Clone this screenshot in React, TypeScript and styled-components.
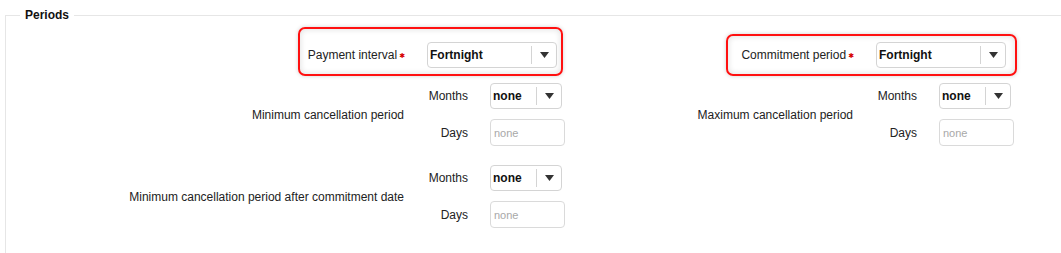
import React from "react";
import styled, { createGlobalStyle } from "styled-components";

const GlobalStyle = createGlobalStyle`
  html, body {
    margin: 0;
    padding: 0;
    background: #fff;
    font-family: "Liberation Sans", Arial, sans-serif;
    font-size: 12px;
    color: #222;
  }
`;

const Fieldset = styled.fieldset`
  margin: 8px 0 0 5px;
  padding: 20px 0 40px 0;
  border: 1px solid #e6e6e6;
  border-right: none;
  min-width: 0;
`;

const Legend = styled.legend`
  margin-left: 14px;
  padding: 0 5px;
  font-weight: bold;
  font-size: 12px;
  color: #111;
  line-height: 14px;
`;

const Columns = styled.div`
  display: grid;
  grid-template-columns: 449px 449px;
  align-items: start;
`;

const Column = styled.div`
  display: flex;
  flex-direction: column;
  align-items: flex-start;
`;

const FieldRow = styled.div<{ $mt?: number }>`
  position: relative;
  display: grid;
  grid-template-columns: 399px auto;
  column-gap: 22px;
  align-items: center;
  margin-top: ${(p) => p.$mt ?? 0}px;
`;

const GroupRow = styled.div<{ $mt?: number }>`
  display: grid;
  grid-template-columns: 398px auto;
  column-gap: 22px;
  align-items: center;
  margin-top: ${(p) => p.$mt ?? 0}px;
`;

const SubGrid = styled.div`
  display: grid;
  grid-template-columns: 42px auto;
  column-gap: 22px;
  row-gap: 10px;
  align-items: center;
`;

const Label = styled.label`
  text-align: right;
  white-space: nowrap;
  color: #222;
`;

const Star = styled.span`
  color: #d60000;
  font-family: "DejaVu Sans", sans-serif;
  font-size: 7px;
  margin-left: 2px;
  vertical-align: 1px;
`;

const Highlight = styled.div<{ $t: number; $r: number; $b: number; $l: number }>`
  position: absolute;
  top: ${(p) => p.$t}px;
  right: ${(p) => p.$r}px;
  bottom: ${(p) => p.$b}px;
  left: ${(p) => p.$l}px;
  border: 2px solid #ff1010;
  border-radius: 7px;
  box-shadow: 0 0 4px rgba(0, 0, 0, 0.18), inset 0 0 6px rgba(0, 0, 0, 0.14);
  pointer-events: none;
`;

const SelectBox = styled.div<{ $w: number }>`
  width: ${(p) => p.$w}px;
  height: 26px;
  box-sizing: border-box;
  border: 1px solid #d4d4d4;
  border-radius: 4px;
  background: #fff;
  display: flex;
  align-items: center;
`;

const SelectValue = styled.span`
  flex: 1;
  padding-left: 2px;
  font-weight: bold;
  font-size: 12px;
  color: #111;
`;

const Divider = styled.span`
  width: 1px;
  height: 18px;
  background: #d4d4d4;
`;

const ArrowCell = styled.span`
  width: 24px;
  display: flex;
  justify-content: center;
  align-items: center;
`;

const TextInput = styled.input`
  width: 75px;
  height: 27px;
  box-sizing: border-box;
  border: 1px solid #dadada;
  border-radius: 4px;
  padding: 0 0 0 3px;
  font-family: "Liberation Sans", Arial, sans-serif;
  font-size: 11px;
  outline: none;
  &::placeholder {
    color: #a8a8a8;
  }
`;

function Select({ value, width }: { value: string; width: number }) {
  return (
    <SelectBox $w={width}>
      <SelectValue>{value}</SelectValue>
      <Divider />
      <ArrowCell>
        <svg width="9" height="6" viewBox="0 0 9 6">
          <path d="M0 0 L9 0 L4.5 6 Z" fill="#333" />
        </svg>
      </ArrowCell>
    </SelectBox>
  );
}

function CancellationGroup({ label, mt }: { label: string; mt?: number }) {
  return (
    <GroupRow $mt={mt}>
      <Label>{label}</Label>
      <SubGrid>
        <Label>Months</Label>
        <Select value="none" width={72} />
        <Label>Days</Label>
        <TextInput placeholder="none" />
      </SubGrid>
    </GroupRow>
  );
}

export default function App() {
  return (
    <>
      <GlobalStyle />
      <Fieldset>
        <Legend>Periods</Legend>
        <Columns>
          <Column>
            <FieldRow>
              <Highlight $t={-15} $r={-6} $b={-8} $l={292} />
              <Label>
                Payment interval<Star>✱</Star>
              </Label>
              <Select value="Fortnight" width={130} />
            </FieldRow>
            <CancellationGroup label="Minimum cancellation period" mt={15} />
            <CancellationGroup label="Minimum cancellation period after commitment date" mt={19} />
          </Column>
          <Column>
            <FieldRow>
              <Highlight $t={-8} $r={-11} $b={-8} $l={271} />
              <Label>
                Commitment period<Star>✱</Star>
              </Label>
              <Select value="Fortnight" width={130} />
            </FieldRow>
            <CancellationGroup label="Maximum cancellation period" mt={15} />
          </Column>
        </Columns>
      </Fieldset>
    </>
  );
}
